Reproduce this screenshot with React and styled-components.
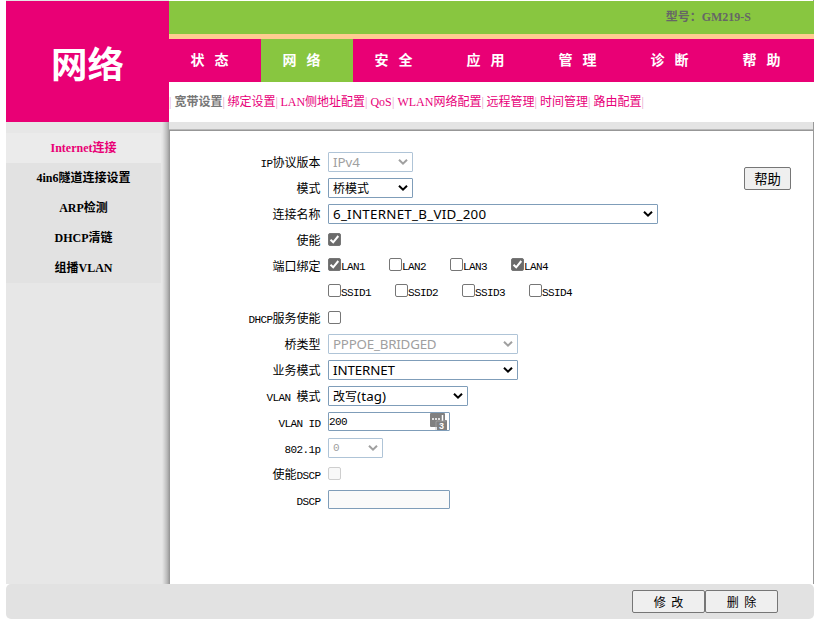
import React from 'react';
import styled, { createGlobalStyle } from 'styled-components';

const Global = createGlobalStyle`
  * { box-sizing: border-box; }
  body { margin: 0; background: #fff; color: #000; overflow: hidden; font: 12px/16px "Liberation Serif", "Noto Sans CJK SC", serif; }
  button { margin: 0; padding: 0; }
`;
const Page = styled.div`width: 808px; height: 619px; margin-left: 6px; display: flex; flex-direction: column; white-space: nowrap;`;
const TopEdge = styled.div`height: 1px; flex: none; background: linear-gradient(to right, #e5e5e5 163px, #fff 163px, #fff 807px, #999 807px);`;
const Header = styled.header`height: 121px; flex: none; display: flex;`;
const Title = styled.h1`
  width: 163px; height: 121px; margin: 0; background: #e90075; color: #fff; text-align: center;
  font: bold 36.5px/123px "Noto Sans CJK SC", sans-serif;
`;
const HeaderMain = styled.div`flex: 1; min-width: 0;`;
const Model = styled.div`
  height: 38px; padding: 8px 63px 0 0; background: #88c640; border-bottom: 5px solid #ffcc90;
  color: #666; font-weight: bold; text-align: right;
`;
const Nav = styled.nav`height: 43px; display: flex; background: #e90075;`;
const NavItem = styled.a`
  width: 92px; padding-left: 21.5px; background: ${p => (p.$active ? '#88c640' : '#e90075')}; color: #fff;
  font: bold 14px/41px "Noto Sans CJK SC", sans-serif; word-spacing: 6.9px;
`;
const SubNav = styled.div`height: 40px; padding: 12px 0 0 0; display: flex; color: #e5a0c5;`;
const SubItem = styled.a`
  width: ${p => p.$w}px; color: #e8007a; display: flex; justify-content: space-between;
  ${p => p.$active && 'color: #777; font-weight: bold;'}
  i { font-style: normal; font-weight: normal; color: #e5a0c5; }
`;
const Body = styled.div`height: 462px; flex: none; display: flex;`;
const Sidebar = styled.aside`
  width: 164px; padding-top: 11px;
  background: linear-gradient(to right, #e7e7e7 156px, #d7d7d7 158px, #bbb 161px, #929292 164px);
`;
const SideItem = styled.a`
  display: block; width: 155px; height: 30px; text-align: center; font-weight: bold; line-height: 30px;
  background: ${p => (p.$active ? '#ebebeb' : '#e2e2e2')}; color: ${p => (p.$active ? '#e90075' : '#000')};
`;
const Content = styled.main`flex: 1; display: flex; flex-direction: column; border-right: 1px solid #999;`;
const ContentEdge = styled.div`height: 9px; margin-left: -1px; background: linear-gradient(#e4e4e4 7px, #b9b9b9 7px, #b9b9b9 8px, #979797 8px);`;
const Panel = styled.div`flex: 1; display: flex; padding-top: 18px;`;
const Form = styled.div`width: 574px;`;
const Row = styled.div`height: 26px; display: flex; align-items: center;`;
const Label = styled.label`width: 150.5px; margin-right: 7.5px; text-align: right; font-family: "Noto Sans CJK SC", sans-serif;`;
const Half = styled.span`font: 11px/14px "Liberation Mono", monospace; letter-spacing: -0.6px; white-space: pre;`;
const SelectBox = styled.div`
  width: ${p => p.$w}px; height: 20px; border: 1px solid ${p => (p.$disabled ? '#afc4d7' : '#7f9db9')}; border-radius: 1px;
  padding: 0 4px; display: flex; align-items: center; justify-content: space-between;
  font: 13.33px/18px "Noto Sans", "Noto Sans CJK SC", sans-serif; color: ${p => (p.$disabled ? '#a0a0a0' : '#000')};
  svg { margin-top: -1px; flex: none; }
`;
const Value = styled.span`
  letter-spacing: ${p => p.$ls || 0}px;
  ${p => p.$mono && 'font: 11px/16px "Liberation Mono", monospace;'}
`;
const Cjk = styled.span`font: 12px/16px "Noto Sans CJK SC", sans-serif; letter-spacing: 0;`;
const Input = styled.div`
  width: 122px; height: 19px; margin-top: -1px; border: 1px solid #7f9db9; border-radius: 1px; background: ${p => (p.$disabled ? '#fafafa' : '#fff')};
  display: flex; justify-content: space-between; align-items: center;
  svg { flex: none; margin-right: 2px; }
`;
const CheckBox = styled.span`
  width: 13px; height: 13px; margin-top: -1px; flex: none; border: 1px solid ${p => (p.$disabled ? '#cecece' : '#767676')}; border-radius: 2px;
  background: ${p => (p.$on ? '#6b6b6b' : p.$disabled ? '#f8f8f8' : '#fff')}; display: block;
  svg { display: block; }
`;
const Choice = styled.div`
  width: ${p => p.$w}px; display: flex; align-items: center; height: 16px;
  ${CheckBox} { margin-top: -3px; }
  ${Half} { margin-top: 2px; }
`;
const Button = styled.button`
  width: ${p => p.$w}px; height: ${p => p.$h}px; background: #efefef; color: #000; border: 1px solid #767676; border-radius: 2px;
  font: ${p => p.$size}px/18px "Noto Sans CJK SC", sans-serif; word-spacing: 3px;
`;
const HelpSlot = styled.div`padding-top: 18px;`;
const Footer = styled.footer`
  height: 35px; flex: none; background: #e2e2e2; border-radius: 5px; padding: 6px 36px 0 0; display: flex; justify-content: flex-end;
`;

const Mixed = ({ text }) => text.split(/([A-Za-z0-9. ]+)/).map((t, i) => (i % 2 ? <Half key={i}>{t}</Half> : t));
const Check = ({ on, disabled }) => (
  <CheckBox $on={on} $disabled={disabled}>
    {on && <svg width="11" height="11" viewBox="0 0 11 11"><path d="M1.5 5.7 4.2 8.3 9.3 2" fill="none" stroke="#fff" strokeWidth="2" /></svg>}
  </CheckBox>
);
const Select = ({ w, disabled, ls, mono, children }) => (
  <SelectBox $w={w} $disabled={disabled}>
    <Value $ls={ls} $mono={mono}>{children}</Value>
    <svg width="10" height="8" viewBox="0 0 10 8"><path d="M1 1.7 5 5.7 9 1.7" fill="none" stroke="currentColor" strokeWidth="2" /></svg>
  </SelectBox>
);
const Field = ({ label, children }) => <Row><Label><Mixed text={label} /></Label>{children}</Row>;
const KeypadIcon = () => (
  <svg width="17" height="17" viewBox="0 0 17 17">
    <path d="M1 0h13q1 0 1 1v6h1q1 0 1 1v9H7v-3H1q-1 0-1-1V1q0-1 1-1z" fill="#808080" />
    <path d="M2 6h2M5 6h2M8 6h2M12.5 2v6" stroke="#fff" strokeWidth="1.5" />
    <path d="M6 17V9q0-1 1-1h9" fill="none" stroke="#aaa" strokeWidth=".7" />
    <text x="9" y="16" fill="#fff" fontFamily="Liberation Sans" fontWeight="bold" fontSize="9">3</text>
  </svg>
);

const nav = ['状 态', '网 络', '安 全', '应 用', '管 理', '诊 断', '帮 助'];
const sub = [['宽带设置', 50], ['绑定设置', 50], ['LAN侧地址配置', 87], ['QoS', 24], ['WLAN网络配置', 86], ['远程管理', 50.5], ['时间管理', 50.5], ['路由配置', 50.5]];
const side = ['Internet连接', '4in6隧道连接设置', 'ARP检测', 'DHCP清链', '组播VLAN'];

export default function App() {
  return (
    <Page>
      <Global />
      <TopEdge />
      <Header>
        <Title>网络</Title>
        <HeaderMain>
          <Model>型号：GM219-S</Model>
          <Nav>{nav.map((n, i) => <NavItem key={n} $active={i === 1}>{n}</NavItem>)}</Nav>
          <SubNav>
            <span>|&nbsp;</span>
            {sub.map(([t, w], i) => <React.Fragment key={t}><SubItem $w={w} $active={i === 0}>{t}<i>|</i></SubItem><span>&nbsp;</span></React.Fragment>)}
          </SubNav>
        </HeaderMain>
      </Header>
      <Body>
        <Sidebar>{side.map((s, i) => <SideItem key={s} $active={i === 0}>{s}</SideItem>)}</Sidebar>
        <Content>
          <ContentEdge />
          <Panel>
            <Form>
              <Field label="IP协议版本"><Select w={85} disabled>IPv4</Select></Field>
              <Field label="模式"><Select w={85}><Cjk>桥模式</Cjk></Select></Field>
              <Field label="连接名称"><Select w={330} ls={0.28}>6_INTERNET_B_VID_200</Select></Field>
              <Field label="使能"><Check on /></Field>
              <Field label="端口绑定">{[1, 2, 3, 4].map(n => <Choice key={n} $w={61}><Check on={n === 1 || n === 4} /><Half>LAN{n}</Half></Choice>)}</Field>
              <Field label="">{[1, 2, 3, 4].map(n => <Choice key={n} $w={67}><Check /><Half>SSID{n}</Half></Choice>)}</Field>
              <Field label="DHCP服务使能"><Check /></Field>
              <Field label="桥类型"><Select w={190} disabled ls={-0.2}>PPPOE_BRIDGED</Select></Field>
              <Field label="业务模式"><Select w={190} ls={-0.1}>INTERNET</Select></Field>
              <Field label="VLAN 模式"><Select w={140} ls={0.15}><Cjk>改写</Cjk>(tag)</Select></Field>
              <Field label="VLAN ID"><Input><Half>200</Half><KeypadIcon /></Input></Field>
              <Field label="802.1p"><Select w={55} disabled mono>0</Select></Field>
              <Field label="使能DSCP"><Check disabled /></Field>
              <Field label="DSCP"><Input $disabled /></Field>
            </Form>
            <HelpSlot><Button $w={47} $h={23} $size={13.33}>帮助</Button></HelpSlot>
          </Panel>
        </Content>
      </Body>
      <Footer>
        <Button $w={73} $h={23} $size={12}>修 改</Button>
        <Button $w={73} $h={23} $size={12}>删 除</Button>
      </Footer>
    </Page>
  );
}
